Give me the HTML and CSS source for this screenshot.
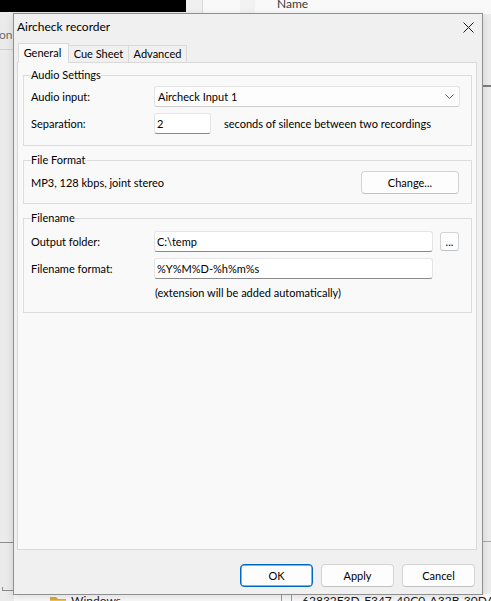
FILE: index.html
```html
<!DOCTYPE html>
<html>
<head>
<meta charset="utf-8">
<title>Aircheck recorder</title>
<link rel="stylesheet" href="styles.css">
</head>
<body>
<div class="desktop">
  <div class="bg-terminal"></div>
  <div class="bg-explorer-top">
    <div class="bg-nav"></div>
    <div class="bg-band"></div>
    <span class="bg-name">Name</span>
  </div>
  <div class="bg-left">
    <span class="bg-on">on</span>
    <div class="bg-left-line"></div>
    <div class="bg-left-line2"></div>
    <div class="bg-left-box"></div>
  </div>
  <div class="bg-right-line"></div>
  <div class="bg-right-line2"></div>
  <div class="bg-bottom">
    <svg class="bg-folder" width="16" height="12" viewBox="0 0 16 12"><path d="M0 2h6l2 2h8v8H0z" fill="#dcaa3c"/><path d="M0 5h16v7H0z" fill="#f0c454"/></svg>
    <span class="bg-wind">Windows</span>
    <div class="bg-vline bg-vline-a"></div>
    <div class="bg-vline bg-vline-b"></div>
    <span class="bg-guid">62832F3D-F347-49C0-A32B-30DA306E9C1A</span>
  </div>

  <div class="dialog">
    <div class="titlebar">
      <span class="title">Aircheck recorder</span>
      <svg class="close" width="11" height="11" viewBox="0 0 11 11"><path d="M0.5 0.5L10.5 10.5M10.5 0.5L0.5 10.5" stroke="#1a1a1a" stroke-width="1" fill="none"/></svg>
    </div>
    <div class="tabs">
      <div class="tab tab-general active">General</div>
      <div class="tab tab-cue">Cue Sheet</div>
      <div class="tab tab-adv">Advanced</div>
    </div>
    <div class="panel">
      <fieldset class="group group-audio">
        <legend>Audio Settings</legend>
        <div class="rows">
          <div class="row">
            <span class="lbl">Audio input:</span>
            <div class="combo">
              <span>Aircheck Input 1</span>
              <svg class="chev" width="9" height="5" viewBox="0 0 9 5"><path d="M0.5 0.5L4.5 4.5L8.5 0.5" stroke="#5a5a5a" stroke-width="1" fill="none"/></svg>
            </div>
          </div>
          <div class="row">
            <span class="lbl">Separation:</span>
            <div class="field-line">
              <div class="edit edit-short">2</div>
              <span class="hint">seconds of silence between two recordings</span>
            </div>
          </div>
        </div>
      </fieldset>

      <fieldset class="group group-format">
        <legend>File Format</legend>
        <div class="format-row">
          <span class="format-text">MP3, 128 kbps, joint stereo</span>
          <button class="btn btn-change">Change...</button>
        </div>
      </fieldset>

      <fieldset class="group group-name">
        <legend>Filename</legend>
        <div class="rows">
          <div class="row">
            <span class="lbl">Output folder:</span>
            <div class="field-line">
              <div class="edit edit-grow">C:\temp</div>
              <button class="btn btn-dots">...</button>
            </div>
          </div>
          <div class="row">
            <span class="lbl">Filename format:</span>
            <div class="field-line">
              <div class="edit edit-grow">%Y%M%D-%h%m%s</div>
              <span class="dots-spacer"></span>
            </div>
          </div>
          <div class="row row-note">
            <span class="lbl"></span>
            <span class="note">(extension will be added automatically)</span>
          </div>
        </div>
      </fieldset>
    </div>
    <div class="footer">
      <button class="btn btn-foot btn-ok">OK</button>
      <button class="btn btn-foot">Apply</button>
      <button class="btn btn-foot">Cancel</button>
    </div>
  </div>
</div>
</body>
</html>
```

FILE: styles.css
```css
* {
  box-sizing: border-box;
}

html,
body {
  margin: 0;
  padding: 0;
}

body {
  width: 491px;
  height: 601px;
  overflow: hidden;
  background: #ececec;
  font-family: Lato, "Noto Sans", sans-serif;
  font-size: 11px;
  color: #000;
}

.desktop {
  position: relative;
  width: 491px;
  height: 601px;
  overflow: hidden;
}

/* ---------- background windows ---------- */
.bg-terminal {
  position: absolute;
  left: 0;
  top: 0;
  width: 186px;
  height: 12px;
  background: #000;
}

.bg-explorer-top {
  position: absolute;
  left: 186px;
  top: 0;
  width: 305px;
  height: 14px;
  background: #f9f9f9;
  overflow: hidden;
}

.bg-nav {
  position: absolute;
  left: 0;
  top: 0;
  width: 17px;
  height: 14px;
  background: #f0f0f0;
  border-right: 1px solid #dadada;
}

.bg-band {
  position: absolute;
  left: 54px;
  top: 0;
  width: 15px;
  height: 14px;
  background: #f2f2f2;
}

.bg-name {
  position: absolute;
  left: 91px;
  top: -4px;
  line-height: 16px;
  font-size: 12px;
  color: #3a3a3a;
}

.bg-left {
  position: absolute;
  left: 0;
  top: 12px;
  width: 14px;
  height: 589px;
  background: #ebebeb;
  overflow: hidden;
}

.bg-on {
  position: absolute;
  left: -1px;
  top: 15px;
  line-height: 16px;
  font-size: 12px;
  color: #6b6b6b;
}

.bg-left-line {
  position: absolute;
  left: 0;
  top: 37px;
  width: 14px;
  height: 1px;
  background: #cfcfcf;
}

.bg-left-line2 {
  position: absolute;
  left: 0;
  top: 530px;
  width: 14px;
  height: 1px;
  background: #8e8e8e;
}

.bg-left-box {
  position: absolute;
  left: 2px;
  top: 575px;
  width: 14px;
  height: 4px;
  border-left: 1px solid #8e8e8e;
  border-bottom: 1px solid #8e8e8e;
}

.bg-right-line {
  position: absolute;
  left: 482px;
  top: 85px;
  width: 9px;
  height: 2px;
  background: #7d7d7d;
}

.bg-right-line2 {
  position: absolute;
  left: 482px;
  top: 541px;
  width: 9px;
  height: 1px;
  background: #a8a8a8;
}

.bg-bottom {
  position: absolute;
  left: 14px;
  top: 594px;
  width: 477px;
  height: 7px;
  background: #fafafa;
  overflow: hidden;
}

.bg-folder {
  position: absolute;
  left: 36px;
  top: 1px;
}

.bg-wind {
  position: absolute;
  left: 57px;
  top: -1px;
  line-height: 16px;
  font-size: 12px;
  color: #1a1a1a;
}

.bg-vline {
  position: absolute;
  top: 0;
  width: 1px;
  height: 7px;
  background: #a0a0a0;
}

.bg-vline-a {
  left: 267px;
}

.bg-vline-b {
  left: 277px;
}

.bg-guid {
  position: absolute;
  left: 288px;
  top: -1px;
  line-height: 16px;
  font-size: 12px;
  color: #1a1a1a;
  white-space: nowrap;
}

/* ---------- dialog ---------- */
.dialog {
  position: absolute;
  left: 13px;
  top: 13px;
  width: 470px;
  height: 582px;
  background: #f0f0f0;
  border: 1px solid #8f8f8f;
  box-shadow: 0 2px 8px rgba(0, 0, 0, 0.12);
  display: flex;
  flex-direction: column;
}

.titlebar {
  height: 29px;
  flex: none;
  display: flex;
  justify-content: space-between;
  align-items: flex-start;
  padding: 5px 8px 0 3px;
}

.title {
  line-height: 16px;
  font-size: 12px;
}

.close {
  margin-top: 3px;
}

.tabs {
  height: 19px;
  flex: none;
  display: flex;
  align-items: flex-end;
  padding-left: 4px;
}

.tab {
  height: 17px;
  border: 1px solid #d9d9d9;
  border-bottom: none;
  background: #f0f0f0;
  text-align: center;
  line-height: 16px;
  margin-left: -1px;
}

.tab.active {
  height: 20px;
  margin-bottom: -1px;
  margin-left: 0;
  background: #f9f9f9;
  position: relative;
  z-index: 1;
  line-height: 17px;
  padding-right: 2px;
}

.tab-general {
  width: 51px;
}

.tab-cue {
  width: 61px;
}

.tab-adv {
  width: 59px;
}

.panel {
  height: 488px;
  flex: none;
  margin: 0 5px 0 3px;
  border: 1px solid #d9d9d9;
  background: #f9f9f9;
  padding: 5px 4px 0 5px;
}

/* ---------- group boxes ---------- */
.group {
  margin: 7px 0 0;
  padding: 4px 11px 11px 7px;
  border: 1px solid #dcdcdc;
  min-inline-size: 0;
}

.group legend {
  padding: 0;
  margin: 0;
  line-height: 14px;
  height: 14px;
}

.group-audio {
  margin-top: 0;
}

.group-format {
  padding: 4px 12px 9px 7px;
}

.group-name {
  padding: 6px 11px 11px 7px;
}

.rows {
  display: flex;
  flex-direction: column;
  gap: 6px;
}

.row {
  display: grid;
  grid-template-columns: 123px 1fr;
  align-items: center;
  height: 21px;
}

.lbl {
  line-height: 16px;
}

.field-line {
  display: flex;
  align-items: center;
  gap: 7px;
  height: 21px;
}

.combo {
  height: 21px;
  background: #fdfdfd;
  border: 1px solid #e3e3e3;
  border-bottom-color: #cdcdcd;
  border-radius: 3px;
  display: flex;
  align-items: center;
  justify-content: space-between;
  padding: 0 5px 0 3px;
  line-height: 19px;
}

.chev {
  display: block;
}

.edit {
  height: 21px;
  background: #fff;
  border: 1px solid #e5e5e5;
  border-bottom-color: #8a8a8a;
  border-radius: 3px;
  padding: 0 2px;
  line-height: 19px;
}

.edit-short {
  width: 57px;
  flex: none;
}

.edit-grow {
  flex: 1;
}

.hint {
  margin-left: 6px;
  line-height: 16px;
  white-space: nowrap;
}

.dots-spacer {
  width: 20px;
  flex: none;
}

.row-note {
  height: 16px;
}

.row-note .note {
  padding-left: 1px;
  line-height: 16px;
}

.format-row {
  display: flex;
  justify-content: space-between;
  align-items: center;
  height: 23px;
}

/* ---------- buttons ---------- */
.btn {
  font: inherit;
  color: #000;
  margin: 0;
  padding: 0;
  background: #fdfdfd;
  border: 1px solid #d3d3d3;
  border-bottom-color: #c2c2c2;
  border-radius: 4px;
  line-height: 16px;
  text-align: center;
}

.btn-change {
  width: 98px;
  height: 23px;
}

.btn-dots {
  width: 19px;
  height: 19px;
  margin-right: 1px;
  border-radius: 3px;
  line-height: 14px;
  flex: none;
}

.footer {
  display: flex;
  justify-content: flex-end;
  gap: 8px;
  padding: 14px 7px 0 0;
}

.btn-foot {
  width: 73px;
  height: 23px;
}

.btn-ok {
  border: 1px solid #0067c0;
  box-shadow: inset 0 0 0 0.5px #0067c0;
}
```
